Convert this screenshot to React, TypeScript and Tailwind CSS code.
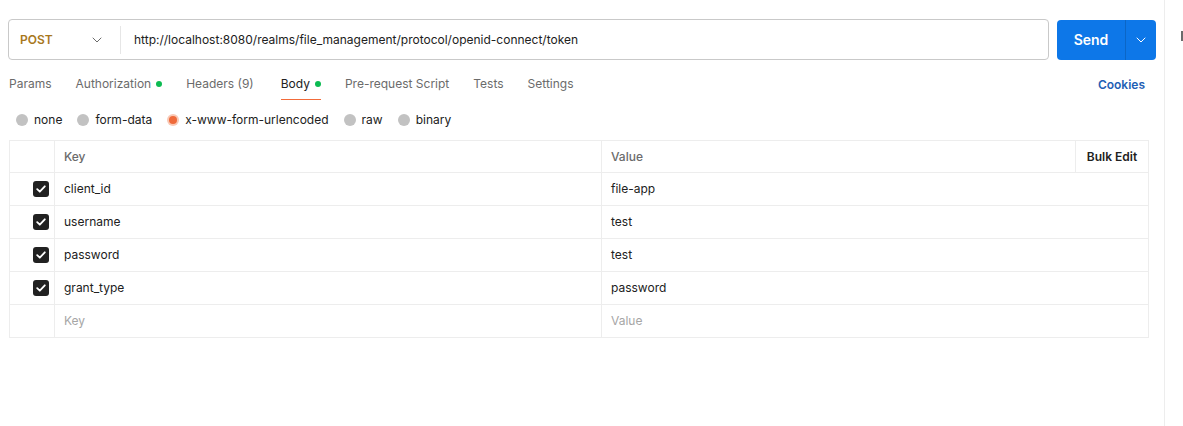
import React from "react";

const tabs = [
  { label: "Params" },
  { label: "Authorization", dot: true },
  { label: "Headers", count: "(9)" },
  { label: "Body", dot: true, active: true },
  { label: "Pre-request Script" },
  { label: "Tests" },
  { label: "Settings" },
];

const bodyTypes = [
  { label: "none" },
  { label: "form-data" },
  { label: "x-www-form-urlencoded", active: true },
  { label: "raw" },
  { label: "binary" },
];

const params = [
  { key: "client_id", value: "file-app" },
  { key: "username", value: "test" },
  { key: "password", value: "test" },
  { key: "grant_type", value: "password" },
];

function Chevron({ className }: { className?: string }) {
  return (
    <svg width="10" height="6" viewBox="0 0 10 6" fill="none" className={className}>
      <path d="M1 1l4 4 4-4" stroke="currentColor" strokeWidth="1" strokeLinecap="round" strokeLinejoin="round" />
    </svg>
  );
}

function CheckBox() {
  return (
    <div className="w-4 h-4 rounded-[3px] bg-[#212121] flex items-center justify-center">
      <svg width="10" height="8" viewBox="0 0 10 8" fill="none">
        <path d="M1.2 4.2l2.6 2.5L8.8 1.3" stroke="#fff" strokeWidth="1.8" strokeLinecap="round" strokeLinejoin="round" />
      </svg>
    </div>
  );
}

export default function App() {
  return (
    <div className="w-[1183px] h-[426px] bg-white flex overflow-hidden text-[12px] text-[#212121]" style={{ fontFamily: "Inter, 'Noto Sans', sans-serif" }}>
      <div className="w-[1165px] shrink-0 border-r border-[#ededed] pl-2 pr-2">
        {/* URL bar */}
        <div className="flex items-center gap-2 mt-[19px]">
          <div className="flex-1 h-[41px] border border-[#c9c9c9] rounded-[4px] flex items-center">
            <div className="w-[111px] flex items-center justify-between pl-[11px] pr-[18px]">
              <span className="font-semibold text-[#a8781d]">POST</span>
              <Chevron className="text-[#6b6b6b]" />
            </div>
            <div className="w-px h-[28px] bg-[#e6e6e6]" />
            <span className="pl-[13px] text-[#212121]">
              http://localhost:8080/realms/file_management/protocol/openid-connect/token
            </span>
          </div>
          <div className="w-[99px] h-[40px] rounded-[4px] bg-[#0d77e8] flex items-center text-white">
            <div className="w-[68px] flex justify-center font-semibold text-[14px]">Send</div>
            <div className="w-px h-full bg-[#0b66c6]" />
            <div className="flex-1 flex justify-center">
              <Chevron className="text-white" />
            </div>
          </div>
        </div>

        {/* Tabs */}
        <div className="flex items-end justify-between h-[40px] pr-[11px]">
          <div className="flex items-end gap-[24px] pl-px">
            {tabs.map((t) => (
              <div
                key={t.label}
                className={
                  "flex items-center gap-[5px] pb-[6px] border-b-[1.5px] " +
                  (t.active ? "ml-[3px] border-[#f26b3a] text-[#212121]" : "border-transparent text-[#6b6b6b]")
                }
              >
                <span>
                  {t.label}
                  {t.count && <span> {t.count}</span>}
                </span>
                {t.dot && <span className="w-[6px] h-[6px] rounded-full bg-[#0cbb52]" />}
              </div>
            ))}
          </div>
          <span className="pb-[6px] font-semibold text-[#1f5fb5]">Cookies</span>
        </div>

        {/* Body types */}
        <div className="flex items-center gap-[15px] h-[40px] pl-[8px]">
          {bodyTypes.map((b) => (
            <div key={b.label} className="flex items-center gap-[6px]">
              {b.active ? (
                <span className="w-[12px] h-[12px] rounded-full bg-[#f9c9b6] flex items-center justify-center">
                  <span className="w-[8px] h-[8px] rounded-full bg-[#ef6a3a]" />
                </span>
              ) : (
                <span className="w-[12px] h-[12px] rounded-full bg-[#c2c2c2]" />
              )}
              <span className="text-[#212121]">{b.label}</span>
            </div>
          ))}
        </div>

        {/* Table */}
        <div className="ml-px w-[1140px] border border-[#ededed]">
          <div className="flex h-[32px] border-b border-[#ededed]">
            <div className="w-[45px] border-r border-[#ededed]" />
            <div className="w-[547px] border-r border-[#ededed] flex items-center px-[9px] font-medium text-[#6b6b6b]">Key</div>
            <div className="w-[474px] border-r border-[#ededed] flex items-center px-[9px] font-medium text-[#6b6b6b]">Value</div>
            <div className="flex-1 flex items-center justify-center font-semibold text-[#212121]">Bulk Edit</div>
          </div>
          {params.map((p) => (
            <div key={p.key} className="flex h-[33px] border-b border-[#ededed]">
              <div className="w-[45px] border-r border-[#ededed] flex items-center justify-end pr-[5px]">
                <CheckBox />
              </div>
              <div className="w-[547px] border-r border-[#ededed] flex items-center px-[9px]">{p.key}</div>
              <div className="flex-1 flex items-center px-[9px]">{p.value}</div>
            </div>
          ))}
          <div className="flex h-[32px]">
            <div className="w-[45px] border-r border-[#ededed]" />
            <div className="w-[547px] border-r border-[#ededed] flex items-center px-[9px] text-[#a6a6a6]">Key</div>
            <div className="flex-1 flex items-center px-[9px] text-[#a6a6a6]">Value</div>
          </div>
        </div>
      </div>
      <div className="flex-1 pt-[31px] pl-[16px]">
        <div className="w-[2px] h-[10px] bg-[#6b6b6b]" />
      </div>
    </div>
  );
}
